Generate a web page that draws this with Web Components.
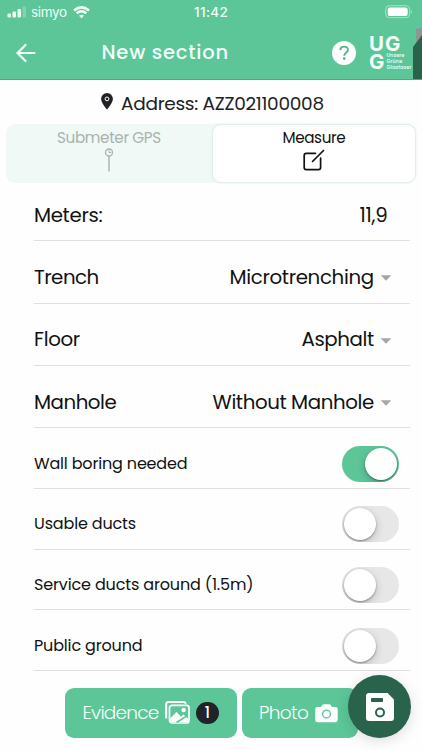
<!DOCTYPE html>
<html lang="en">
<head>
<meta charset="utf-8">
<meta name="viewport" content="width=device-width">
<title>New section</title>
<style>
body{margin:0;background:#fefefe;overflow:hidden;font-family:Poppins,Inter,"Open Sans",sans-serif;color:#111}
</style>
</head>
<body>
<app-screen></app-screen>
<script>
const define=(name,html,setup)=>{
  customElements.define(name,class extends HTMLElement{
    connectedCallback(){
      if(this.shadowRoot)return;
      const root=this.attachShadow({mode:'open'});
      const t=document.createElement('template');
      t.innerHTML=html;
      root.append(t.content.cloneNode(true));
      if(setup)setup(this,root);
    }
  });
};

/* A single line of text tracked to fill a given width. */
define('fit-text',`<style>:host{display:inline-block;white-space:nowrap;line-height:1.5;flex:none}span{display:inline-block}</style><span></span>`,(el,root)=>{
  const s=root.querySelector('span');
  s.textContent=el.getAttribute('text');
  el.style.fontSize=el.getAttribute('size')+'px';
  const w=+el.getAttribute('w');
  el.style.width=w+'px';
  const n=s.getBoundingClientRect().width;
  s.style.letterSpacing=(w-n)/Math.max(1,s.textContent.length-.5)+'px';
});

define('status-bar',`<style>
:host{display:grid;grid-template-columns:1fr 34px 1fr;height:24px;align-items:center;color:#effff8;padding:0 7px 0 7px;font-family:Inter,sans-serif}
.l{display:flex;align-items:center}.r{display:flex;justify-content:flex-end}
svg{display:block}
</style>
<div class="l"><svg width="20" height="12" viewBox="0 0 20 12" fill="#effff8"><rect x=".5" y="7.5" width="3.5" height="4" rx="1"/><rect x="5.500" y="5.500" width="3.500" height="6" rx="1"/><rect x="10.500" y="3" width="3.500" height="8.500" rx="1"/><rect x="15.500" y=".5" width="3.500" height="11" rx="1" opacity=".25"/></svg>
<fit-text text="simyo" w="36" size="13.5" style="margin-left:4px;font-weight:400"></fit-text>
<svg style="margin-left:6px" width="17" height="13" viewBox="0 0 17 13" fill="none" stroke="#effff8" stroke-width="2.500"><path d="M1 4.500Q8.500-1.800 16 4.500M3.700 7.400Q8.500 3.200 13.300 7.400"/><path d="M6 9.700Q8.500 7.800 11 9.700L8.500 12.200z" fill="#effff8" stroke="none"/></svg></div>
<fit-text text="11:42" w="34" size="13.5" style="font-weight:500"></fit-text>
<div class="r"><svg style="margin-right:2px" width="28" height="14" viewBox="0 0 28 14"><rect x=".7" y=".7" width="24" height="12" rx="3.700" fill="none" stroke="#a9e2c9"/><rect x="2.700" y="2.500" width="20" height="8.500" rx="2.200" fill="#fff"/><path d="M26 4.700q2 2 0 4z" fill="#a9e2c9"/></svg></div>`);

define('ugg-logo',`<style>
:host{display:grid;width:44px;height:36px;grid-template-rows:17.5px 18.5px;color:#f3fff9;font-weight:700}
.b{display:flex}.s{display:flex;flex-direction:column;padding-top:.500px;margin-left:1.500px;font-weight:500}
.big{font-family:Inter,sans-serif}
</style><div class="b"><fit-text class="big" text="UG" w="32" size="20.5" style="line-height:17px"></fit-text></div>
<div class="b"><fit-text class="big" text="G" w="16" size="20.5" style="line-height:17.500px"></fit-text>
<div class="s"><fit-text text="Unsere" w="18" size="5" style="line-height:5.800px"></fit-text><fit-text text="Grüne" w="16" size="5" style="line-height:5.800px"></fit-text><fit-text text="Glasfaser" w="25" size="5" style="line-height:5.800px"></fit-text></div></div>`);

define('app-header',`<style>
:host{display:block;position:relative;height:80px;box-sizing:border-box;background:#5cc699;border-bottom:1px solid #55a583}
.bar{display:flex;align-items:center;height:56px;padding:2px 0 0 16px;box-sizing:border-box}
svg{display:block;flex:none}
.edge{position:absolute;right:0;top:27px}
</style><status-bar></status-bar>
<div class="bar">
<svg width="20" height="20" viewBox="0 0 20 20" fill="none" stroke="#f3fff9" stroke-width="2.200" stroke-linecap="round" stroke-linejoin="round"><path d="M18.500 10H1.800M9.500 2L1.500 10l8 8"/></svg>
<fit-text text="New section" w="127" size="19.5" style="margin-left:65.500px;color:#f3fff9;font-weight:500"></fit-text>
<svg style="margin-left:103.500px" width="24" height="24" viewBox="0 0 24 24"><circle cx="12" cy="12" r="12" fill="#fff"/><path d="M8.300 9.100C8.400 6.700 10 5.600 12.100 5.600c2.200 0 3.800 1.400 3.800 3.300 0 2.700-3.700 2.900-3.700 5.900" fill="none" stroke="#50b78b" stroke-width="1.900"/><circle cx="12.200" cy="17.600" r="1.350" fill="#50b78b"/></svg>
<ugg-logo style="margin-left:13px"></ugg-logo></div>
<svg class="edge" width="9" height="52" viewBox="0 0 9 52"><path d="M3 2L9 0v18H3z" fill="#8f9695"/><path d="M0 20L9 8v44H0z" fill="#29634b"/></svg>`);

define('address-line',`<style>:host{display:flex;align-items:center;height:44px;padding:4px 0 0 101px;box-sizing:border-box;color:#202125}svg{margin:-5px 8px 0 0}</style>
<svg width="12" height="17" viewBox="0 0 12 17"><path d="M6 0a5.900 5.900 0 0 0-5.900 5.900C.1 9.700 6 16.500 6 16.500s5.900-6.800 5.900-10.600A5.900 5.900 0 0 0 6 0z" fill="#202125"/><circle cx="6" cy="5.900" r="1.900" fill="none" stroke="#fff" stroke-width="1"/></svg>
<fit-text text="Address: AZZ021100008" w="203" size="18.500"></fit-text>`);

define('mode-tab',`<style>
:host{display:flex;flex-direction:column;align-items:center;height:59px;box-sizing:border-box;border-radius:9px;color:#a9b2ae;padding-top:3px}
:host([active]){background:#fff;border:1.500px solid #e3efeb;box-shadow:0 0 2px #dcebe5;color:#111;padding-top:2px}
fit-text{height:22px}
</style><fit-text></fit-text><slot></slot>`,(el,root)=>{
  const old=root.querySelector('fit-text'),f=document.createElement('fit-text');
  f.setAttribute('text',el.getAttribute('label'));f.setAttribute('w',el.getAttribute('w'));f.setAttribute('size','15.2');
  old.replaceWith(f);
});

define('mode-tabs',`<style>:host{display:grid;grid-template-columns:206px 204px;height:59px;margin:0 6px;background:#f0f9f6;border-radius:9px}svg{display:block}</style>
<mode-tab label="Submeter GPS" w="104"><svg style="margin-top:-1px" width="10" height="25" viewBox="0 0 10 25" fill="none" stroke="#a9b2ae"><circle cx="5" cy="4.500" r="3.500" stroke-width="1.300"/><path d="M5 2.300v2.200h2.200" stroke-width="1"/><path d="M5 8v15.500" stroke-width="1.400"/></svg></mode-tab>
<mode-tab active label="Measure" w="63"><svg width="22" height="23" viewBox="0 0 22 23" fill="none" stroke="#111" stroke-width="1.700" stroke-linecap="round"><path d="M12.500 4.300H3.300Q1.200 4.300 1.200 6.500v12q0 2.100 2.100 2.100h12.200q2.100 0 2.100-2.100V9M9.500 12.500L20.500 1.500"/></svg></mode-tab>`);

define('value-row',`<style>
:host{display:flex;justify-content:space-between;align-items:center;height:62.300px;box-sizing:border-box;margin:0 12px 0 34px;padding:12px 18px 0 0;border-bottom:1px solid #dfdfdf}
:host([plain]){padding-right:22.500px}
.v{display:flex;align-items:center}svg{margin:1px 0 0 6px}:host([plain]) svg{display:none}
</style><slot name="label"></slot><div class="v"><slot name="value"></slot><svg width="12" height="6" viewBox="0 0 12 6"><path d="M.7.300h10.600L6 5.700z" fill="#a6a6a6"/></svg></div>`);

define('toggle-switch',`<style>
:host{display:block;width:57px;height:36px;border-radius:18px;background:#e7e7e7;padding:2px;box-sizing:border-box;overflow:hidden;flex:none}
i{display:block;width:32px;height:32px;border-radius:50%;background:#fff;box-shadow:0 1px 2px 0 #0005,0 3px 9px #0003}
:host([on]){background:#5cc699}:host([on]) i{margin-left:21px}
</style><i></i>`);

define('switch-row',`<style>
:host{display:flex;justify-content:space-between;align-items:center;height:60.700px;box-sizing:border-box;margin:0 12px 0 34px;padding:11.500px 11px 0 0;border-bottom:1px solid #dfdfdf}
</style><slot></slot><toggle-switch></toggle-switch>`,(el,root)=>{
  if(el.hasAttribute('on'))root.querySelector('toggle-switch').setAttribute('on','');
});

define('action-button',`<style>:host{display:flex;align-items:center;height:50px;box-sizing:border-box;border-radius:9px;background:#5cc699;color:#f5fffa;font-weight:300;padding-left:17.500px}</style><slot></slot>`);

define('save-button',`<style>
:host{position:absolute;right:11px;bottom:12px;width:63px;height:63px;border-radius:50%;background:#29634b;box-shadow:0 3px 14px #0002;display:grid;place-items:center}
</style><svg width="28" height="28" viewBox="0 0 28 28"><path d="M3 0h18.500L28 6.500V25q0 3-3 3H3q-3 0-3-3V3Q0 0 3 0z" fill="#fff"/><rect x="5" y="5" width="12" height="4" rx=".8" fill="#29634b"/><circle cx="14" cy="19.500" r="4" fill="none" stroke="#29634b" stroke-width="2"/></svg>`);

define('action-bar',`<style>:host{display:grid;grid-template-columns:172px 116px;column-gap:4.500px;padding:17px 0 0 65px}svg{display:block}
b{display:grid;place-items:center;width:23px;height:22px;border-radius:11px;background:#202428;color:#fff;margin-left:6px;font:500 15px/22px Poppins,Inter,sans-serif}</style>
<action-button><fit-text text="Evidence" w="76.500" size="18.500" style="margin-top:-1px"></fit-text>
<svg style="margin:0 0 0 6px" width="25" height="23" viewBox="0 0 25 23"><path d="M1.200 17.500V3.500Q1.200 1.100 3.600 1.100H18q2.300 0 2.900 1.600" fill="none" stroke="#fff" stroke-width="2"/><rect x="4.500" y="4.300" width="19.500" height="17.700" rx="2.500" fill="none" stroke="#fff" stroke-width="1.700"/><path d="M5 17.800L11.400 11l4.600 4.700 2.400-2.100 5.100 4.400v3H5z" fill="#fff"/><path d="M11.500 21.500l9.500-6" stroke="#5cc699" stroke-width="1.500"/><circle cx="18.600" cy="9" r="2.200" fill="#fff"/></svg><b>1</b></action-button>
<action-button><fit-text text="Photo" w="49.500" size="18.500" style="margin-top:-1px"></fit-text>
<svg style="margin:1px 0 0 6.500px" width="23" height="19" viewBox="0 0 23 19"><path d="M6 3l1.500-2.200Q8 .2 9 .2h5q1 0 1.500.6L17 3h3.500Q22.700 3 22.700 5.200V16q0 2.200-2.200 2.200h-18Q.3 18.200.3 16V5.200Q.3 3 2.500 3z" fill="#fff"/><circle cx="11.500" cy="10" r="3.900" fill="none" stroke="#5cc699" stroke-width="1.400"/></svg></action-button>`);

define('app-screen',`<style>:host{display:block;position:relative;width:422px;height:750px;overflow:hidden}</style>
<app-header></app-header>
<address-line></address-line>
<mode-tabs></mode-tabs>
<value-row plain style="height:58.300px;padding-top:8px"><fit-text slot="label" text="Meters:" w="68.5" size="19.8"></fit-text><fit-text slot="value" text="11,9" w="28" size="19.8"></fit-text></value-row>
<value-row><fit-text slot="label" text="Trench" w="65" size="19.8"></fit-text><fit-text slot="value" text="Microtrenching" w="144.5" size="19.8"></fit-text></value-row>
<value-row><fit-text slot="label" text="Floor" w="46" size="19.8"></fit-text><fit-text slot="value" text="Asphalt" w="72.5" size="19.8"></fit-text></value-row>
<value-row><fit-text slot="label" text="Manhole" w="82.5" size="19.8"></fit-text><fit-text slot="value" text="Without Manhole" w="161.5" size="19.8"></fit-text></value-row>
<switch-row on><fit-text text="Wall boring needed" w="153.5" size="16"></fit-text></switch-row>
<switch-row><fit-text text="Usable ducts" w="102" size="16"></fit-text></switch-row>
<switch-row><fit-text text="Service ducts around (1.5m)" w="219.5" size="16"></fit-text></switch-row>
<switch-row><fit-text text="Public ground" w="108.5" size="16"></fit-text></switch-row>
<action-bar></action-bar>
<save-button></save-button>`);
</script>
</body>
</html>
